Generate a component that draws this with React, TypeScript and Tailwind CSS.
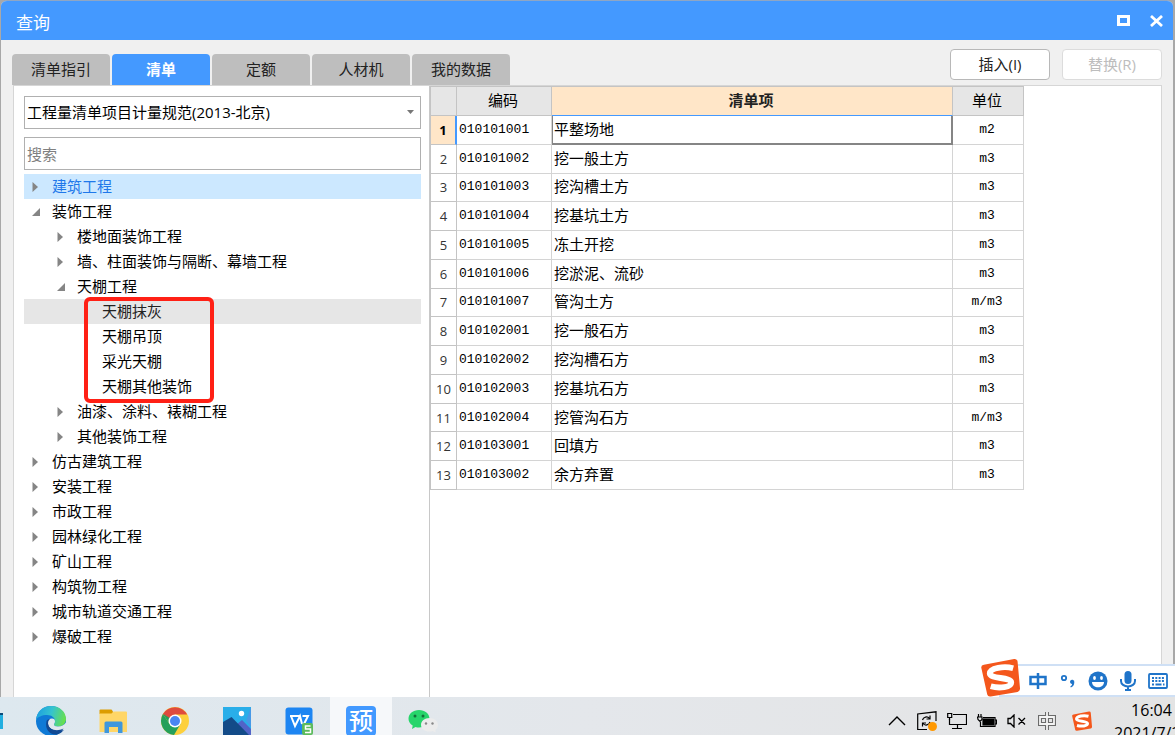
import { useState } from 'react';

const tabs = ['清单指引', '清单', '定额', '人材机', '我的数据'];

type TreeNode = { name: string; open?: boolean; marked?: boolean; children?: TreeNode[] };

const tree: TreeNode[] = [
  { name: '建筑工程', children: [] },
  {
    name: '装饰工程',
    open: true,
    children: [
      { name: '楼地面装饰工程', children: [] },
      { name: '墙、柱面装饰与隔断、幕墙工程', children: [] },
      {
        name: '天棚工程',
        open: true,
        marked: true,
        children: [{ name: '天棚抹灰' }, { name: '天棚吊顶' }, { name: '采光天棚' }, { name: '天棚其他装饰' }],
      },
      { name: '油漆、涂料、裱糊工程', children: [] },
      { name: '其他装饰工程', children: [] },
    ],
  },
  { name: '仿古建筑工程', children: [] },
  { name: '安装工程', children: [] },
  { name: '市政工程', children: [] },
  { name: '园林绿化工程', children: [] },
  { name: '矿山工程', children: [] },
  { name: '构筑物工程', children: [] },
  { name: '城市轨道交通工程', children: [] },
  { name: '爆破工程', children: [] },
];

const items = [
  { code: '010101001', name: '平整场地', unit: 'm2' },
  { code: '010101002', name: '挖一般土方', unit: 'm3' },
  { code: '010101003', name: '挖沟槽土方', unit: 'm3' },
  { code: '010101004', name: '挖基坑土方', unit: 'm3' },
  { code: '010101005', name: '冻土开挖', unit: 'm3' },
  { code: '010101006', name: '挖淤泥、流砂', unit: 'm3' },
  { code: '010101007', name: '管沟土方', unit: 'm/m3' },
  { code: '010102001', name: '挖一般石方', unit: 'm3' },
  { code: '010102002', name: '挖沟槽石方', unit: 'm3' },
  { code: '010102003', name: '挖基坑石方', unit: 'm3' },
  { code: '010102004', name: '挖管沟石方', unit: 'm/m3' },
  { code: '010103001', name: '回填方', unit: 'm3' },
  { code: '010103002', name: '余方弃置', unit: 'm3' },
];

const indents = ['pl-2', 'pl-[33px]', 'pl-[58px]'];

function Arrow({ open }: { open?: boolean }) {
  return (
    <svg width="10" height="10" viewBox="0 0 10 10" fill="#858585">
      {open ? <path d="M8 1v8H0z" /> : <path d="M0.500 0v10L6 5z" />}
    </svg>
  );
}

function TreeList({ nodes, level, marked }: { nodes: TreeNode[]; level: number; marked?: boolean }) {
  return (
    <ul className="relative">
      {nodes.map((node) => {
        let color = 'text-black';
        if (node.name === '建筑工程') color = 'bg-[#cce8ff] text-[#1f78ea]';
        if (node.name === '天棚抹灰') color = 'bg-[#e6e6e6] text-[#222]';
        return (
          <li key={node.name}>
            <button className={`flex h-[25px] w-full items-center text-left ${indents[level]} ${color}`}>
              <span className="w-5 shrink-0">{node.children && <Arrow open={node.open} />}</span>
              {node.name}
            </button>
            {node.open && node.children && (
              <TreeList nodes={node.children} level={level + 1} marked={node.marked} />
            )}
          </li>
        );
      })}
      {/* red frame around the sub items */}
      {marked && (
        <li className="pointer-events-none absolute -top-0.5 -bottom-1 left-[60px] w-[130px] rounded-md border-4 border-[#ff2015]" />
      )}
    </ul>
  );
}

function SogouLogo({ size }: { size: number }) {
  return (
    <svg width={size} height={size} viewBox="0 0 40 40">
      <path d="M3 7 34 1q3-.5 3.500 2.500L40 31q.2 3-2.500 3.800L10 39.500q-3 .5-3.600-2L.3 10Q0 7.500 3 7z" fill="#f4571c" />
      <path
        d="M33 10.500C24 8 9 10 9 16c0 5.500 22 3.500 22 9 0 5-12 6.500-21 4"
        fill="none"
        stroke="#fff"
        strokeWidth="6"
      />
    </svg>
  );
}

function ImeBar() {
  return (
    <div className="absolute right-0 bottom-full flex h-[33px] w-[176px] items-center border-y-2 border-[#cfe0f5] bg-white pl-6 text-[#1f74c9]">
      <div className="absolute -bottom-0.5 -left-[18px]">
        <SogouLogo size={39} />
      </div>
      <button aria-label="中文" className="flex w-[30px] justify-center">
        <svg width="18" height="18" viewBox="0 0 18 18" fill="none" stroke="currentColor" strokeWidth="2.500">
          <path d="M1.500 5h15v7h-15zM9 1v16" />
        </svg>
      </button>
      <button aria-label="标点" className="flex w-[30px] justify-center">
        <svg width="18" height="18" viewBox="0 0 18 18" fill="currentColor">
          <circle cx="5" cy="6" r="2.200" fill="none" stroke="currentColor" strokeWidth="1.800" />
          <path d="M11 9.500a2.200 2.200 0 1 1 4.300 1c0 2.500-1.500 4.500-3.500 5l-.5-1c1-.5 1.700-1.300 1.800-2.500-1.300 0-2.100-1-2.100-2.500z" />
        </svg>
      </button>
      <button aria-label="表情" className="flex w-[30px] justify-center">
        <svg width="20" height="20" viewBox="0 0 20 20">
          <circle cx="10" cy="10" r="9.500" fill="currentColor" />
          <ellipse cx="6.500" cy="7" rx="1.400" ry="2" fill="#fff" />
          <ellipse cx="13.500" cy="7" rx="1.400" ry="2" fill="#fff" />
          <path d="M4 11h12c0 7-12 7-12 0z" fill="#fff" />
        </svg>
      </button>
      <button aria-label="语音" className="flex w-[30px] justify-center">
        <svg width="18" height="20" viewBox="0 0 18 20">
          <rect x="5.500" y="0" width="7" height="13" rx="3.500" fill="currentColor" />
          <path d="M2 8v2a7 5.500 0 0 0 14 0V8M9 15v4M6 19h6" fill="none" stroke="currentColor" strokeWidth="2" />
        </svg>
      </button>
      <button aria-label="键盘" className="flex w-[30px] justify-center">
        <svg width="20" height="16" viewBox="0 0 20 16">
          <rect x="1" y="1" width="18" height="14" rx="1" fill="none" stroke="currentColor" strokeWidth="1.800" />
          <path d="M4 5h12M4 8h12" stroke="currentColor" strokeWidth="2" strokeDasharray="2 1.300" />
          <path d="M4 11.500h2M7.500 11.500h6M15 11.500h1.500" stroke="currentColor" strokeWidth="2" />
        </svg>
      </button>
    </div>
  );
}

const apps = [
  {
    name: 'Edge',
    icon: (
      <svg width="30" height="30" viewBox="0 0 30 30">
        <defs>
          <linearGradient id="edgeTop" x1="0" x2="1" y1="0.300" y2="0.500">
            <stop offset="0" stopColor="#1c9fe0" />
            <stop offset="0.500" stopColor="#35c3cf" />
            <stop offset="1" stopColor="#69e04b" />
          </linearGradient>
        </defs>
        <circle cx="15" cy="15" r="15" fill="#0f7ad6" />
        <path d="M0 14C1 5 7 0 15 0c9 0 15 6 15 13 0 5-4 7.500-8 7.500-3 0-4-1-4-2 0-.8 1-1.300 1-3.500 0-3-3-6-8-6C6 9 1.500 11 0 14z" fill="url(#edgeTop)" />
        <path d="M10.500 15c-2 8 3 13.500 9 13.500 4 0 7-2.500 8.500-5-6 3-15 1-15-6 0-2 .7-3.500 2-4.500-2 0-4 .5-4.500 2z" fill="#114a94" />
        <path d="M12 17.500c0-3 1.500-5 4-5 2 0 3 1.300 3 3 0 1.500-1 2-1 3s1 2 4 2c3.500 0 6-1.500 8-4v4.500l-2.500 3C21 26.500 12.500 24 12 17.500z" fill="#e1e8ee" />
        <path d="M12 17.500c.5 6.500 9 8.500 15.500 5-2 3.500-5.500 5.500-8 5.500-5 0-8-5-7.500-10.500z" fill="#114a94" />
      </svg>
    ),
  },
  {
    name: '文件资源管理器',
    icon: (
      <svg width="28" height="24" viewBox="0 0 28 24">
        <path d="M.5 1.500Q.5.500 1.500.500h11l1.500 2V5H.5z" fill="#dc9c00" />
        <path d="M.5 4.500h12l2-2H27q1 0 1 1V23H.5z" fill="#ffd667" />
        <path d="M5.500 24V14q0-1.500 1.500-1.500h15q1.500 0 1.500 1.500v10H19v-6h-9v6z" fill="#3f97dc" />
      </svg>
    ),
  },
  {
    name: 'Chrome',
    icon: (
      <svg width="28" height="28" viewBox="0 0 28 28">
        <circle cx="14" cy="14" r="14" fill="#fdd03c" />
        <path d="M14 14 1.900 7A14 14 0 0 1 26.100 7.500H14z" fill="#df4b3e" />
        <path d="M1.900 7A14 14 0 0 0 13 28l6.500-11L14 14l-5.500 3z" fill="#25a05b" />
        <path d="M1.900 7 8.500 17 10 9z" fill="#25a05b" />
        <path d="M1.900 7 14 14V7.500H5z" fill="#df4b3e" />
        <circle cx="14" cy="14" r="6.500" fill="#fff" />
        <circle cx="14" cy="14" r="5" fill="#4a86f2" />
      </svg>
    ),
  },
  {
    name: '照片',
    icon: (
      <svg width="28" height="28" viewBox="0 0 28 28">
        <rect width="28" height="28" fill="#29aee9" />
        <path d="M13 18 19 13l9 9v6H13z" fill="#5164c8" />
        <path d="M28 0v20l-5-6z" fill="#5b8be6" opacity="0.600" />
        <path d="M0 15 8.500 10 26 28H0z" fill="#134b88" />
        <circle cx="18.500" cy="6.500" r="2.700" fill="#fff" />
      </svg>
    ),
  },
  {
    name: 'WPS',
    icon: (
      <svg width="28" height="28" viewBox="0 0 28 28">
        <rect x="0.500" y="0.500" width="27" height="27" rx="3" fill="#1d85f2" />
        <path d="M5 9h10M6 9l4 10 5-10 2 8M17.500 9H23l-5 10" fill="none" stroke="#fff" strokeWidth="2" />
        <rect x="17" y="16" width="11" height="12" rx="2" fill="#5cbb5c" />
        <path d="M25.500 19h-5v3h5v3.500h-5.500" fill="none" stroke="#fff" strokeWidth="1.500" />
      </svg>
    ),
  },
  {
    name: '预算',
    icon: (
      <span className="flex size-[30px] items-center justify-center rounded-sm bg-[#4299ff] text-2xl leading-6 font-medium text-white">
        预
      </span>
    ),
  },
  {
    name: '微信',
    icon: (
      <svg width="30" height="24" viewBox="0 0 30 24">
        <path d="M11 1c6 0 10.500 3.700 10.500 8.800S17 18.500 11 18.500q-2 0-3.500-.5L4 20l.7-3.500C2 15 .5 12.500.5 9.800.5 4.700 5 1 11 1z" fill="#27d56b" />
        <circle cx="7" cy="7" r="1.500" fill="#13713a" />
        <circle cx="15" cy="7" r="1.500" fill="#13713a" />
        <path d="M21.500 9c5 0 8.500 3 8.500 6.800 0 2.200-1 3.900-2.800 5.200l.5 2.500-2.900-1.400q-1.500.5-3.300.5c-5 0-8.500-3-8.500-6.800S16.500 9 21.500 9z" fill="#ececec" />
        <circle cx="18" cy="14.500" r="1.200" fill="#888" />
        <circle cx="24.500" cy="14.500" r="1.200" fill="#888" />
      </svg>
    ),
  },
];

function Tray() {
  return (
    <div className="flex shrink-0 items-center text-black">
      <button aria-label="显示隐藏的图标" className="flex w-[30px] justify-center">
        <svg width="18" height="10" viewBox="0 0 18 10" fill="none" stroke="currentColor" strokeWidth="1.400">
          <path d="m1 9 8-8 8 8" />
        </svg>
      </button>
      <button aria-label="更新" className="flex w-[30px] justify-center">
        <svg width="20" height="20" viewBox="0 0 20 20" fill="none" stroke="currentColor" strokeWidth="1.200">
          <path d="M10 18.500H.7V3L19 .8V10" />
          <path d="M5.500 9a4 4 0 0 1 7-1.500M13 4.500v3.500H9.500M13 11a4 4 0 0 1-7 1.500M5.500 15.500V12H9" />
          <circle cx="15.500" cy="15.500" r="4.500" fill="#ff9800" stroke="none" />
        </svg>
      </button>
      <button aria-label="网络" className="flex w-[30px] justify-center">
        <svg width="20" height="18" viewBox="0 0 20 18" fill="none" stroke="currentColor" strokeWidth="1.200">
          <path d="M6 2.500h13.500v10H2.500V7M5 16.500h10M10.500 12.500v4" />
          <path d="M.7 1.500h4v4h-4zM2.500 5v3" />
        </svg>
      </button>
      <button aria-label="电池" className="flex w-[30px] justify-center">
        <svg width="20" height="14" viewBox="0 0 20 14" fill="none" stroke="currentColor" strokeWidth="1.200">
          <path d="M6 3.500h12v9H3.500V8M18.500 6h1v4h-1" />
          <rect x="6" y="5" width="10.500" height="6" fill="currentColor" />
          <path d="M1.500 0v3M4 0v3M.5 3h4.500v2.500L3 7.500l-2-2z" fill="#e6e7e8" />
        </svg>
      </button>
      <button aria-label="静音" className="flex w-[30px] justify-center">
        <svg width="20" height="14" viewBox="0 0 20 14" fill="none" stroke="currentColor" strokeWidth="1.300">
          <path d="M1 4.500h2.500L7 1v12L3.500 9.500H1zM11.500 4l6.500 6.500M18 4l-6.500 6.500" />
        </svg>
      </button>
      <button aria-label="输入法" className="flex w-[30px] justify-center">
        <svg width="18" height="20" viewBox="0 0 18 20" fill="none">
          <path d="M2 6h14v7H2zM9 1v18" stroke="#6b6b6b" strokeWidth="4" />
          <path d="M2 6h14v7H2zM9 1v18" stroke="#f4f4f4" strokeWidth="1.800" />
        </svg>
      </button>
      <button aria-label="搜狗输入法" className="flex w-10 justify-center">
        <SogouLogo size={20} />
      </button>
    </div>
  );
}

function Taskbar() {
  return (
    <footer className="relative h-[38px] shrink-0">
      <ImeBar />
      <div className="h-full overflow-hidden bg-linear-to-r from-[#dde8ef] via-[#e4e7eb] to-[#e4e4e4]">
        <div className="flex h-12 items-stretch">
          <div className="flex w-5 shrink-0 items-center">
            <div className="h-4 w-[3px] border-t-2 border-[#0b4a78] bg-[#22aee0]" />
          </div>
          {apps.map((app) => (
            <button
              key={app.name}
              aria-label={app.name}
              className={`flex w-[62px] shrink-0 items-center justify-center ${app.name === '预算' ? 'bg-[#f6f8fa]' : ''}`}
            >
              {app.icon}
            </button>
          ))}
          <div className="flex-1" />
          <Tray />
          {/* the clock runs past the right edge */}
          <div className="ml-3 w-[61px] shrink-0">
            <div className="w-[75px] pt-0.5 text-base leading-[23px] whitespace-nowrap text-black">
              <div className="text-center">16:04</div>
              <div>2021/7/2</div>
            </div>
          </div>
        </div>
      </div>
    </footer>
  );
}

export default function App() {
  const [activeTab, setActiveTab] = useState('清单');
  const [keyword, setKeyword] = useState('');

  return (
    <div className="flex h-screen flex-col overflow-hidden bg-[#a8a8a8] font-['Open_Sans','Noto_Sans_CJK_SC',sans-serif] text-[15px]">
      <div className="mr-0.5 ml-px flex min-h-0 flex-1 flex-col overflow-hidden rounded-t-md border-t border-[#8fa6c4] bg-[#f0f0f0]">
        {/* TITLE BAR */}
        <header className="flex h-[39px] shrink-0 items-center bg-[#4499ff] pr-2.5 pl-[15px] text-white">
          <h1 className="flex-1 pt-1 text-[17px]">查询</h1>
          <button aria-label="最大化" className="mr-5">
            <svg width="13" height="11" viewBox="0 0 13 11" fill="none" stroke="currentColor" strokeWidth="3">
              <path d="M1.500 1.500h10v8h-10z" />
            </svg>
          </button>
          <button aria-label="关闭">
            <svg width="13" height="12" viewBox="0 0 13 12" fill="none" stroke="currentColor" strokeWidth="2.800">
              <path d="m1 1 11 10M12 1 1 11" />
            </svg>
          </button>
        </header>

        {/* TABS + BUTTONS */}
        <div className="flex h-[45px] shrink-0 items-end pr-[11px] pl-[11px]">
          <nav className="flex flex-1 gap-0.5">
            {tabs.map((tab) => (
              <button
                key={tab}
                onClick={() => setActiveTab(tab)}
                className={`h-[31px] w-[98px] rounded-t-sm ${
                  tab === activeTab ? 'bg-[#4499ff] font-bold text-white' : 'bg-[#bebebe] text-[#222]'
                }`}
              >
                {tab}
              </button>
            ))}
          </nav>
          <div className="flex gap-3 pb-[5px]">
            <button className="h-[31px] w-[100px] rounded-sm border border-[#b8b8b8] bg-white text-[#222]">插入(I)</button>
            <button disabled className="h-[31px] w-[100px] rounded-sm border border-[#dcdcdc] bg-white text-[#bdbdbd]">
              替换(R)
            </button>
          </div>
        </div>

        {/* CONTENT */}
        <main className="mr-[11px] ml-3 flex min-h-0 flex-1 border-x border-t border-[#d6d6d6] bg-white">
          <aside className="w-[416px] shrink-0 border-r border-[#c8c8c8] pt-2.5 pr-2 pl-2.5">
            <div className="relative">
              <select
                aria-label="规范"
                className="h-[33px] w-full appearance-none border border-[#b0b0b0] bg-white px-0.5 text-black"
              >
                <option>工程量清单项目计量规范(2013-北京)</option>
              </select>
              <svg className="pointer-events-none absolute top-3.5 right-[7px]" width="7" height="4" viewBox="0 0 7 4">
                <path d="M0 0h7L3.500 4z" fill="#777" />
              </svg>
            </div>
            <input
              type="text"
              aria-label="搜索"
              placeholder="搜索"
              value={keyword}
              onChange={(e) => setKeyword(e.target.value)}
              className="mt-2 mb-1 block h-[33px] w-full border border-[#b0b0b0] px-0.5 placeholder:text-[#808080]"
            />
            <TreeList nodes={tree} level={0} />
          </aside>

          <div className="min-w-0 flex-1">
            <table className="h-[404px] w-[594px] table-fixed border-separate border-spacing-0 border-t border-l border-[#c4c4c4] text-black">
              <colgroup>
                <col className="w-[26px]" />
                <col className="w-[95px]" />
                <col />
                <col className="w-[71px]" />
              </colgroup>
              <thead>
                <tr className="h-[29px]">
                  <th className="border-r border-b border-[#c4c4c4] bg-[#e6e6e6]" />
                  <th className="border-r border-b border-[#c4c4c4] bg-[#e6e6e6] p-0 pr-0.5 pb-0.5 leading-5 font-normal">编码</th>
                  <th className="border-r border-b border-[#c4c4c4] border-b-[#4499ff] bg-[#ffe6c8] p-0 pr-0.5 pb-0.5 leading-5 font-bold text-[#222]">
                    清单项
                  </th>
                  <th className="border-r border-b border-[#c4c4c4] bg-[#e6e6e6] p-0 pr-0.5 pb-0.5 leading-5 font-normal">单位</th>
                </tr>
              </thead>
              <tbody>
                {items.map((item, i) => (
                  <tr key={item.code}>
                    <td
                      className={`border-b border-[#c4c4c4] p-0 text-center text-[13px] leading-5 ${
                        i === 0 ? 'border-r-2 border-r-[#4499ff] bg-[#ffe6c8] font-bold' : 'border-r text-[#333]'
                      }`}
                    >
                      {i + 1}
                    </td>
                    <td className="border-r border-b border-[#d4d4d4] p-0 pl-0.5 font-['Liberation_Mono',monospace] text-[13px] leading-5">
                      {item.code}
                    </td>
                    <td
                      className={`border-r border-b p-0 pb-0.5 pl-0.5 leading-5 ${
                        i === 0 ? 'border-[#858585] shadow-[inset_1px_0_#858585,inset_-1px_-1px_#858585]' : 'border-[#d4d4d4]'
                      }`}
                    >
                      {item.name}
                    </td>
                    <td className="border-r border-b border-[#d4d4d4] p-0 pr-0.5 text-center font-['Liberation_Mono',monospace] text-[13px] leading-5">
                      {item.unit}
                    </td>
                  </tr>
                ))}
              </tbody>
            </table>
          </div>
        </main>
      </div>
      <Taskbar />
    </div>
  );
}
